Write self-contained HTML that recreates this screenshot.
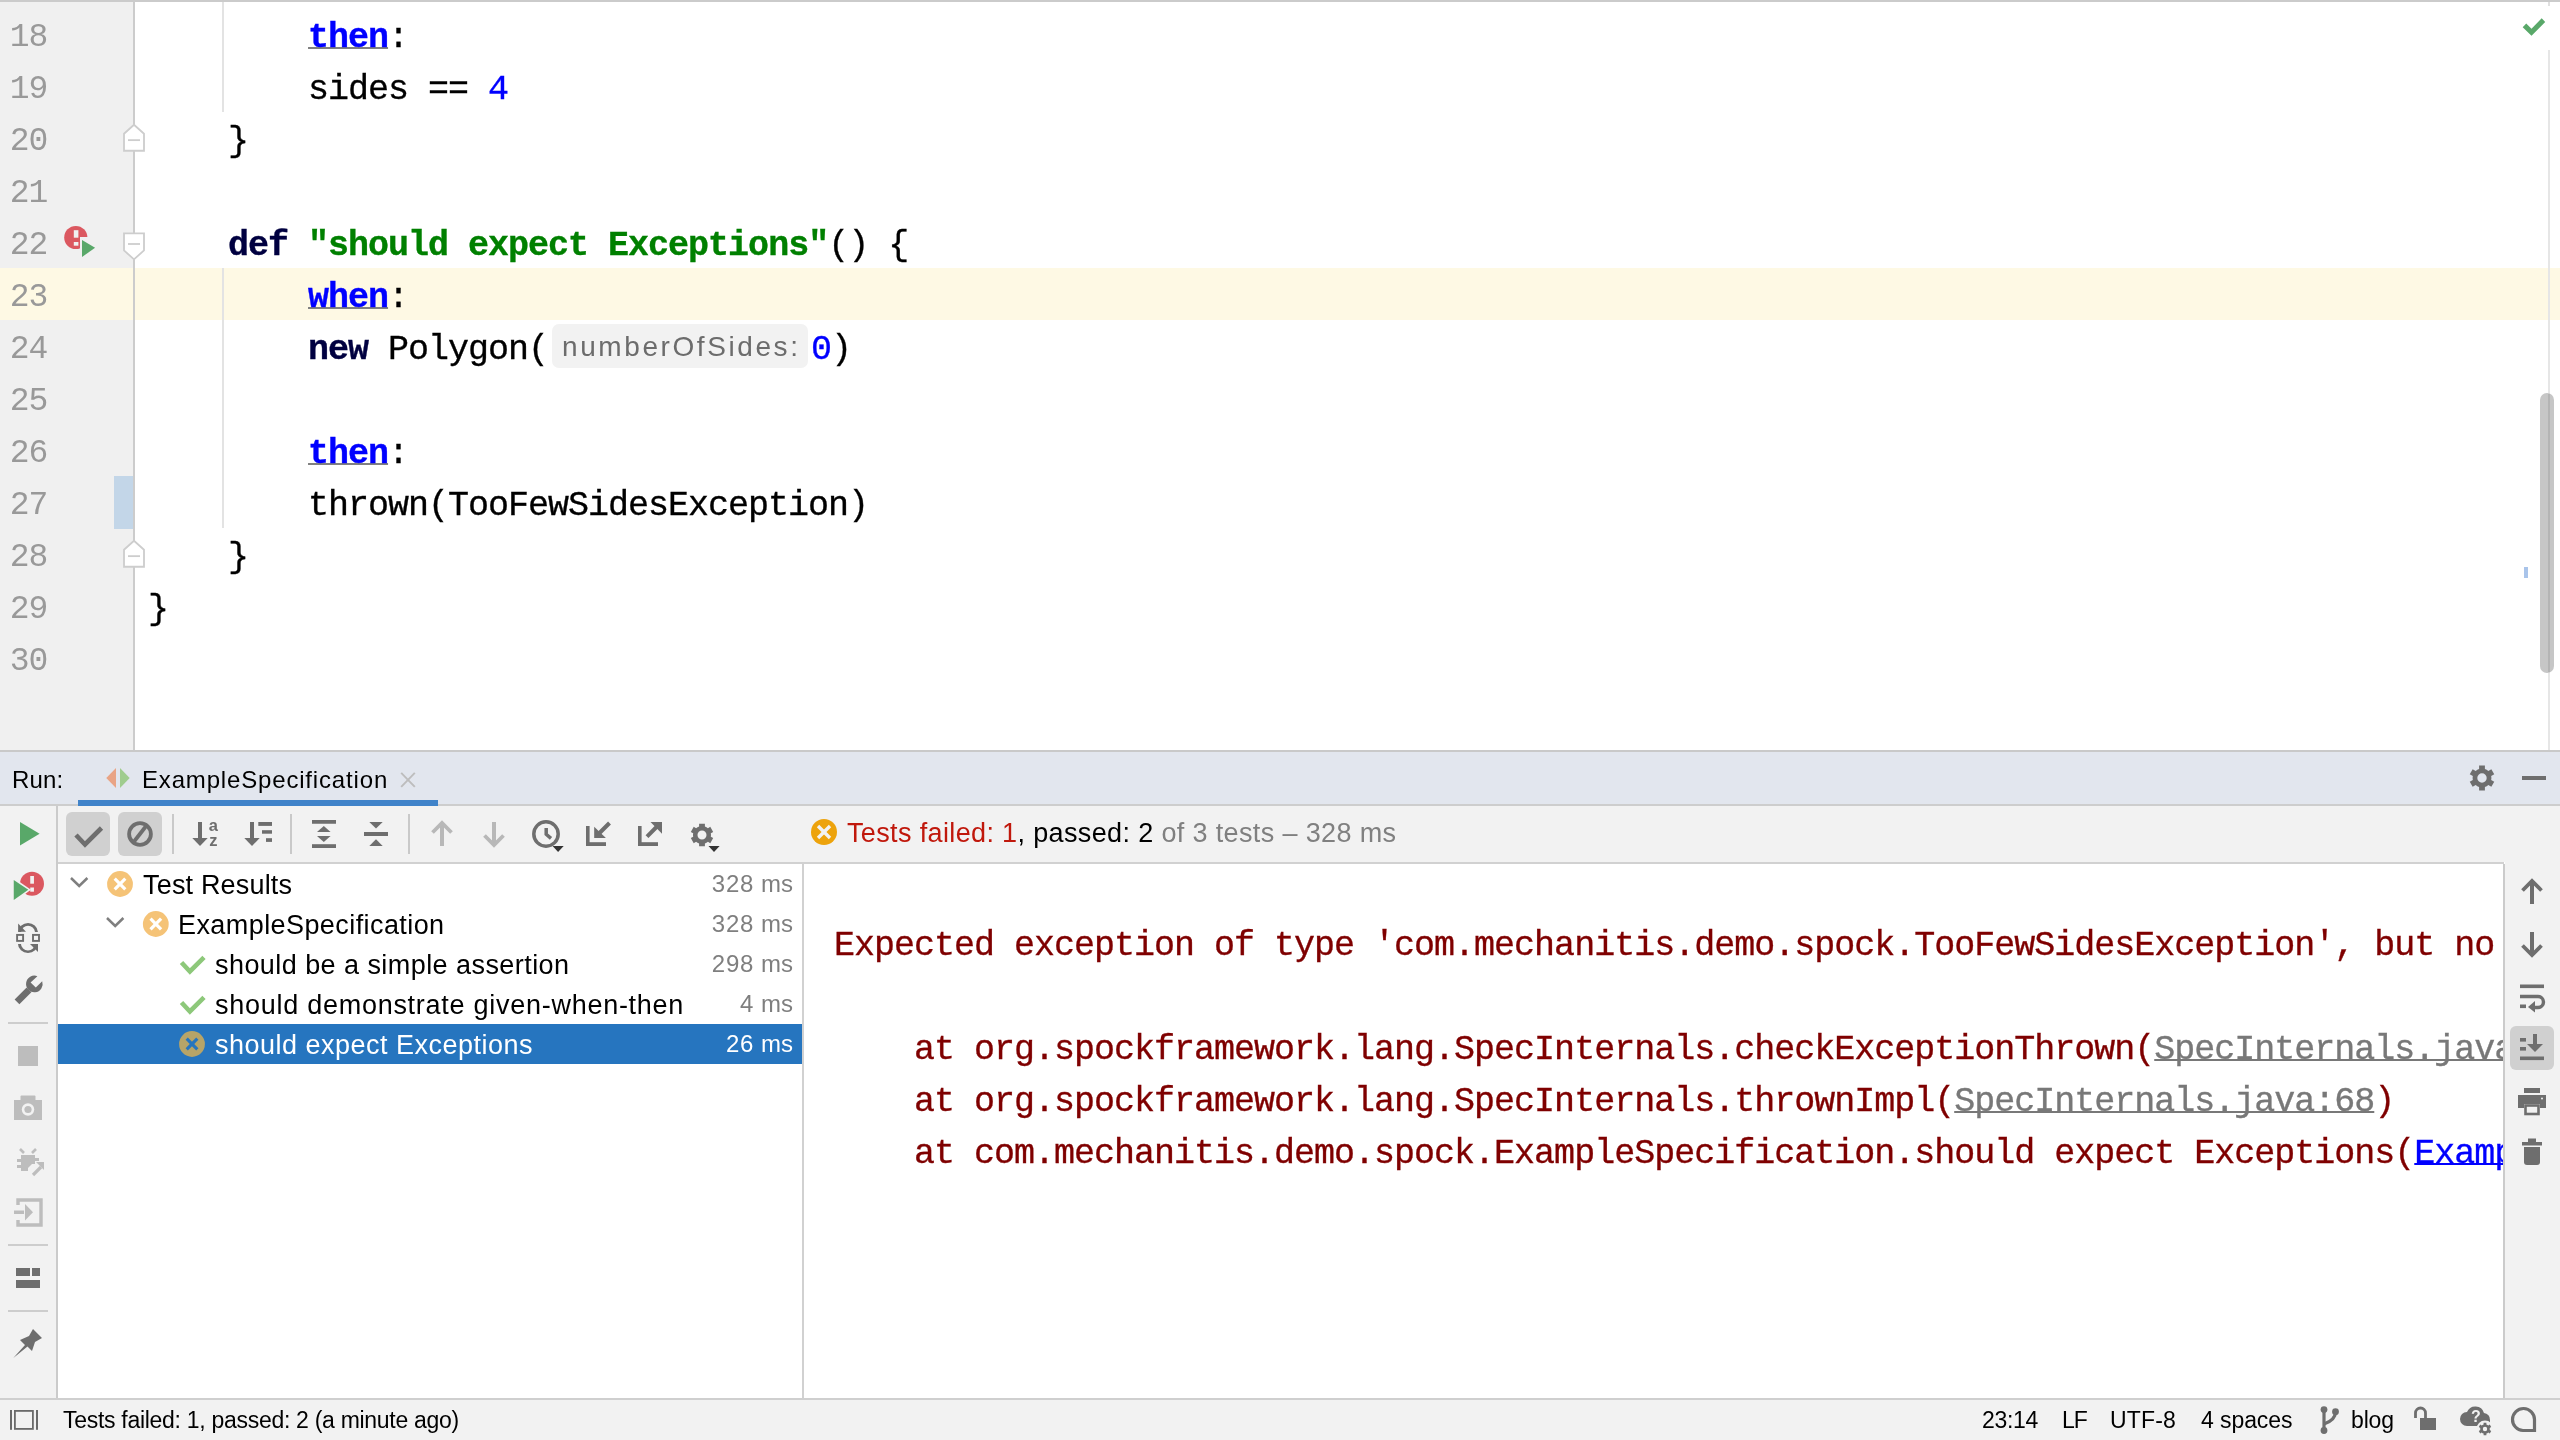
<!DOCTYPE html>
<html><head><meta charset="utf-8">
<style>
*{margin:0;padding:0;box-sizing:border-box}
html,body{width:2560px;height:1440px;overflow:hidden;background:#fff}
body{position:relative;font-family:"Liberation Sans",sans-serif;color:#000}
.a{position:absolute}
.ui,.mono,.ln{will-change:transform}
.mono{font-family:"Liberation Mono",monospace;font-size:35px;letter-spacing:-1px;white-space:pre;line-height:52px;margin-top:3px;-webkit-text-stroke-width:0.35px}
.ln{position:absolute;left:0;width:47px;margin-top:3px;text-align:right;color:#999;font-family:"Liberation Mono",monospace;font-size:33px;letter-spacing:-1.2px;line-height:52px}
.cl{position:absolute;left:148px;height:52px}
.kw{color:#000040;font-weight:bold}
.lab{color:#0000ff;font-weight:bold;text-decoration:underline;text-decoration-color:#808080;text-decoration-thickness:2px;text-underline-offset:0px;text-decoration-skip-ink:none}
.str{color:#008000;font-weight:bold}
.num{color:#0000ff}
.ui{font-size:26px;white-space:pre}
.tm{position:absolute;right:0;color:#808080}
.row{position:absolute;left:58px;width:744px;height:40px;line-height:40px}
.con{position:absolute;left:834px;color:#7f0000}
.lnk{color:#787878;text-decoration:underline;text-decoration-thickness:2px;text-underline-offset:0px;text-decoration-skip-ink:none}
.blnk{color:#0000ff;text-decoration:underline;text-decoration-thickness:2px;text-underline-offset:0px;text-decoration-skip-ink:none}
</style></head><body>

<!-- ===== EDITOR ===== -->
<div class="a" style="left:0;top:0;width:2560px;height:750px;background:#fff;overflow:hidden">
  <div class="a" style="left:0;top:0;width:2560px;height:2px;background:#cbcbcb"></div>
  <div class="a" style="left:0;top:2px;width:133px;height:748px;background:#f0f0f0"></div>
  <!-- caret row -->
  <div class="a" style="left:0;top:268px;width:2560px;height:52px;background:#fef9e4"></div>
  <div class="a" style="left:133px;top:2px;width:2px;height:748px;background:#cccccc"></div>
  <!-- change marker line 27 -->
  <div class="a" style="left:114px;top:476px;width:19px;height:53px;background:#c3d6e8"></div>
  <!-- indent guides -->
  <div class="a" style="left:222px;top:2px;width:2px;height:110px;background:#e3e3e3"></div>
  <div class="a" style="left:222px;top:268px;width:2px;height:260px;background:#e3e3e3"></div>

  <!-- line numbers -->
  <div class="ln" style="top:9px">18</div>
  <div class="ln" style="top:61px">19</div>
  <div class="ln" style="top:113px">20</div>
  <div class="ln" style="top:165px">21</div>
  <div class="ln" style="top:217px">22</div>
  <div class="ln" style="top:269px">23</div>
  <div class="ln" style="top:321px">24</div>
  <div class="ln" style="top:373px">25</div>
  <div class="ln" style="top:425px">26</div>
  <div class="ln" style="top:477px">27</div>
  <div class="ln" style="top:529px">28</div>
  <div class="ln" style="top:581px">29</div>
  <div class="ln" style="top:633px">30</div>

  <!-- code -->
  <div class="cl mono" style="top:9px">        <span class="lab">then</span>:</div>
  <div class="cl mono" style="top:61px">        sides == <span class="num">4</span></div>
  <div class="cl mono" style="top:113px">    }</div>
  <div class="cl mono" style="top:217px">    <span class="kw">def</span> <span class="str">"should expect Exceptions"</span>() {</div>
  <div class="cl mono" style="top:269px">        <span class="lab">when</span>:</div>
  <div class="cl mono" style="top:321px">        <span class="kw">new</span> Polygon(</div>
  <div class="cl mono" style="top:321px;left:811px"><span class="num">0</span>)</div>
  <div class="cl mono" style="top:425px">        <span class="lab">then</span>:</div>
  <div class="cl mono" style="top:477px">        thrown(TooFewSidesException)</div>
  <div class="cl mono" style="top:529px">    }</div>
  <div class="cl mono" style="top:581px">}</div>
  <!-- inlay hint -->
  <div class="a" style="left:552px;top:324px;width:256px;height:44px;border-radius:7px;background:#f2f2f2"></div>
  <div class="a ui" style="left:562px;top:325px;line-height:44px;font-size:28px;color:#6c6c6c;letter-spacing:2.59px">numberOfSides:</div>

  <!-- right side -->
  <div class="a" style="left:2548px;top:50px;width:2px;height:700px;background:#e6e6e6"></div>
  <div class="a" style="left:2540px;top:393px;width:14px;height:280px;border-radius:7px;background:#c6c6c6"></div>
  <div class="a" style="left:2524px;top:567px;width:4px;height:11px;background:#a9c4ea"></div>
</div>

<!-- ===== RUN HEADER ===== -->
<div class="a" style="left:0;top:750px;width:2560px;height:2px;background:#c9c9c9"></div>
<div class="a" style="left:0;top:752px;width:2560px;height:52px;background:#e2e6ee"></div>
<div class="a" style="left:0;top:804px;width:2560px;height:2px;background:#cdcdcd"></div>
<div class="a" style="left:78px;top:800px;width:360px;height:6px;background:#4083c9"></div>
<div class="a ui" style="left:12px;top:753.5px;line-height:52px;font-size:24px;letter-spacing:0.16px">Run:</div>
<div class="a ui" style="left:141.5px;top:753.5px;line-height:52px;font-size:24px;letter-spacing:0.83px">ExampleSpecification</div>

<!-- ===== TOOLBAR ROW ===== -->
<div class="a" style="left:0;top:806px;width:2560px;height:56px;background:#f2f2f2"></div>
<div class="a" style="left:58px;top:862px;width:2446px;height:2px;background:#d1d1d1"></div>
<div class="a ui" style="left:846.5px;top:804.5px;line-height:56px;font-size:27px;letter-spacing:0.36px"><span style="color:#c0180c">Tests failed: 1</span>, passed: 2<span style="color:#808080"> of 3 tests – 328 ms</span></div>

<!-- ===== LEFT TOOLBAR ===== -->
<div class="a" style="left:0;top:862px;width:56px;height:536px;background:#f2f2f2"></div>
<div class="a" style="left:56px;top:806px;width:2px;height:592px;background:#cbcbcb"></div>

<!-- ===== TREE ===== -->
<div class="a" style="left:58px;top:864px;width:744px;height:534px;background:#fff"></div>
<div class="a" style="left:802px;top:864px;width:2px;height:534px;background:#d1d1d1"></div>
<div class="row" style="top:1024px;background:#2675bf"></div>
<div class="a ui" style="left:143.3px;top:864.5px;line-height:40px;font-size:27px;letter-spacing:0.18px">Test Results</div>
<div class="a ui" style="left:177.9px;top:904.5px;line-height:40px;font-size:27px;letter-spacing:0.42px">ExampleSpecification</div>
<div class="a ui" style="left:214.6px;top:944.5px;line-height:40px;font-size:27px;letter-spacing:0.44px">should be a simple assertion</div>
<div class="a ui" style="left:214.6px;top:984.5px;line-height:40px;font-size:27px;letter-spacing:0.73px">should demonstrate given-when-then</div>
<div class="a ui" style="left:214.6px;top:1024.5px;line-height:40px;font-size:27px;letter-spacing:0.49px;color:#fff">should expect Exceptions</div>
<div class="a ui" style="left:600px;width:193px;text-align:right;top:863.5px;line-height:40px;font-size:24px;color:#7f7f7f;letter-spacing:0.7px">328<span style="margin-left:7px;letter-spacing:0">ms</span></div>
<div class="a ui" style="left:600px;width:193px;text-align:right;top:903.5px;line-height:40px;font-size:24px;color:#7f7f7f;letter-spacing:0.7px">328<span style="margin-left:7px;letter-spacing:0">ms</span></div>
<div class="a ui" style="left:600px;width:193px;text-align:right;top:943.5px;line-height:40px;font-size:24px;color:#7f7f7f;letter-spacing:0.7px">298<span style="margin-left:7px;letter-spacing:0">ms</span></div>
<div class="a ui" style="left:600px;width:193px;text-align:right;top:983.5px;line-height:40px;font-size:24px;color:#7f7f7f;letter-spacing:0.7px">4<span style="margin-left:7px;letter-spacing:0">ms</span></div>
<div class="a ui" style="left:600px;width:193px;text-align:right;top:1023.5px;line-height:40px;font-size:24px;color:#fff;letter-spacing:0.7px">26<span style="margin-left:7px;letter-spacing:0">ms</span></div>

<!-- ===== CONSOLE ===== -->
<div class="a" style="left:804px;top:864px;width:1699px;height:534px;background:#fff;overflow:hidden">
  <div class="a mono" style="left:30px;top:53px;color:#7f0000">Expected exception of type 'com.mechanitis.demo.spock.TooFewSidesException', but no exception was thrown</div>
  <div class="a mono" style="left:30px;top:157px;color:#7f0000">    at org.spockframework.lang.SpecInternals.checkExceptionThrown(<span class="lnk">SpecInternals.java:79</span>)</div>
  <div class="a mono" style="left:30px;top:209px;color:#7f0000">    at org.spockframework.lang.SpecInternals.thrownImpl(<span class="lnk">SpecInternals.java:68</span>)</div>
  <div class="a mono" style="left:30px;top:261px;color:#7f0000">    at com.mechanitis.demo.spock.ExampleSpecification.should expect Exceptions(<span class="blnk">ExampleSpecification.groovy:26</span>)</div>
</div>
<div class="a" style="left:2503px;top:864px;width:2px;height:534px;background:#cbcbcb"></div>
<div class="a" style="left:2505px;top:862px;width:55px;height:536px;background:#f2f2f2"></div>

<!-- ===== STATUS BAR ===== -->
<div class="a" style="left:0;top:1398px;width:2560px;height:2px;background:#cfcfcf"></div>
<div class="a" style="left:0;top:1400px;width:2560px;height:40px;background:#f2f2f2"></div>
<div class="a ui" style="left:63px;top:1400px;line-height:40px;font-size:23px;letter-spacing:-0.29px">Tests failed: 1, passed: 2 (a minute ago)</div>
<div class="a ui" style="left:1981.5px;top:1400px;line-height:40px;font-size:23px;letter-spacing:-0.3px">23:14</div>
<div class="a ui" style="left:2062px;top:1400px;line-height:40px;font-size:23px;letter-spacing:-1px">LF</div>
<div class="a ui" style="left:2110px;top:1400px;line-height:40px;font-size:23px;letter-spacing:0.15px">UTF-8</div>
<div class="a ui" style="left:2201px;top:1400px;line-height:40px;font-size:23px;letter-spacing:-0.08px">4 spaces</div>
<div class="a ui" style="left:2350.8px;top:1400px;line-height:40px;font-size:23px;letter-spacing:-0.16px">blog</div>

<svg class="a" style="left:0;top:0" width="2560" height="1440">
<polygon points="2522.70,27.30 2526.25,23.50 2531.50,28.75 2541.70,18.30 2545.20,21.90 2531.50,35.80" fill="#59a869" />
<rect x="2548.00" y="2.00" width="2.00" height="4.00" rx="0.00" fill="#e0e0e0" />
<rect x="2548.00" y="394.00" width="2.00" height="278.00" rx="0.00" fill="#b4b4b4" />
<circle cx="75.80" cy="237.50" r="11.60" fill="#db5860" />
<rect x="80.00" y="237.00" width="12.00" height="24.00" rx="0.00" fill="#f0f0f0" />
<rect x="73.80" y="230.20" width="4.60" height="7.50" rx="0.00" fill="#f0f0f0" />
<rect x="73.80" y="242.00" width="4.60" height="3.70" rx="0.00" fill="#f0f0f0" />
<polygon points="82.00,240.00 82.00,257.00 95.10,247.80" fill="#59a869" />
<polygon points="124.00,150.75 144.00,150.75 144.00,133.75 134.00,124.75 124.00,133.75" fill="#fff" stroke="#cdcdcd" stroke-width="1.8"/>
<line x1="128.00" y1="140.15" x2="140.00" y2="140.15" stroke="#cdcdcd" stroke-width="1.80" stroke-linecap="butt"/>
<polygon points="124.00,233.40 144.00,233.40 144.00,250.40 134.00,259.40 124.00,250.40" fill="#fff" stroke="#cdcdcd" stroke-width="1.8"/>
<line x1="128.00" y1="244.00" x2="140.00" y2="244.00" stroke="#cdcdcd" stroke-width="1.80" stroke-linecap="butt"/>
<polygon points="124.00,566.75 144.00,566.75 144.00,549.75 134.00,540.75 124.00,549.75" fill="#fff" stroke="#cdcdcd" stroke-width="1.8"/>
<line x1="128.00" y1="556.15" x2="140.00" y2="556.15" stroke="#cdcdcd" stroke-width="1.80" stroke-linecap="butt"/>
<polygon points="106.25,778.00 116.00,768.00 116.00,788.00" fill="#e9a485" />
<polygon points="120.00,768.00 120.00,788.00 129.70,778.00" fill="#9fcc8e" />
<line x1="401.20" y1="772.80" x2="414.80" y2="786.80" stroke="#bdbdbd" stroke-width="1.90" stroke-linecap="butt"/>
<line x1="414.80" y1="772.80" x2="401.20" y2="786.80" stroke="#bdbdbd" stroke-width="1.90" stroke-linecap="butt"/>
<path d="M2479.10 769.06 L2479.10 765.53 L2484.90 765.53 L2484.90 769.06 A9.40 9.40 0 0 1 2488.29 771.02 L2491.35 769.25 L2494.25 774.28 L2491.19 776.04 A9.40 9.40 0 0 1 2491.19 779.96 L2494.25 781.72 L2491.35 786.75 L2488.29 784.98 A9.40 9.40 0 0 1 2484.90 786.94 L2484.90 790.47 L2479.10 790.47 L2479.10 786.94 A9.40 9.40 0 0 1 2475.71 784.98 L2472.65 786.75 L2469.75 781.72 L2472.81 779.96 A9.40 9.40 0 0 1 2472.81 776.04 L2469.75 774.28 L2472.65 769.25 L2475.71 771.02 A9.40 9.40 0 0 1 2479.10 769.06 Z M2477.30 778.00 A4.70 4.70 0 1 0 2486.70 778.00 A4.70 4.70 0 1 0 2477.30 778.00 Z" fill="#6e6e6e" fill-rule="evenodd"/>
<rect x="2522.00" y="776.00" width="24.00" height="4.00" rx="0.00" fill="#6e6e6e" />
<rect x="66.00" y="812.00" width="44.00" height="44.00" rx="6.00" fill="#d0d0d0" />
<rect x="118.00" y="812.00" width="44.00" height="44.00" rx="6.00" fill="#d0d0d0" />
<polyline points="76,835 85,844.5 101.5,828" fill="none" stroke="#6e6e6e" stroke-width="4.6"/>
<circle cx="140" cy="834" r="10.9" fill="none" stroke="#6e6e6e" stroke-width="3.8"/>
<line x1="133.30" y1="842.50" x2="146.90" y2="825.00" stroke="#6e6e6e" stroke-width="3.80" stroke-linecap="butt"/>
<rect x="172.00" y="814.00" width="2.00" height="40.00" rx="0.00" fill="#c9c9c9" />
<rect x="408.00" y="814.00" width="2.00" height="40.00" rx="0.00" fill="#c9c9c9" />
<rect x="290.00" y="814.00" width="2.00" height="40.00" rx="0.00" fill="#c9c9c9" />
<rect x="198.00" y="822.00" width="4.00" height="17.00" rx="0.00" fill="#6e6e6e" />
<polygon points="192.30,838.00 207.70,838.00 200.00,846.00" fill="#6e6e6e" />
<text x="213.4" y="831" font-family="Liberation Sans" font-weight="bold" font-size="16.5" fill="#6e6e6e" text-anchor="middle">a</text>
<text x="213.4" y="846" font-family="Liberation Sans" font-weight="bold" font-size="16.5" fill="#6e6e6e" text-anchor="middle">z</text>
<rect x="250.00" y="822.00" width="4.00" height="17.00" rx="0.00" fill="#6e6e6e" />
<polygon points="244.30,838.00 259.70,838.00 252.00,846.00" fill="#6e6e6e" />
<rect x="258.30" y="822.00" width="13.70" height="3.90" rx="0.00" fill="#6e6e6e" />
<rect x="262.00" y="830.20" width="10.00" height="3.50" rx="0.00" fill="#6e6e6e" />
<rect x="266.00" y="838.20" width="6.00" height="3.70" rx="0.00" fill="#6e6e6e" />
<rect x="312.00" y="820.00" width="24.00" height="3.75" rx="0.00" fill="#6e6e6e" />
<polygon points="317.00,832.00 330.60,832.00 323.80,826.00" fill="#6e6e6e" />
<polygon points="317.00,836.00 330.60,836.00 323.80,842.00" fill="#6e6e6e" />
<rect x="312.00" y="844.20" width="24.00" height="3.80" rx="0.00" fill="#6e6e6e" />
<polygon points="369.30,822.00 382.70,822.00 376.00,828.40" fill="#6e6e6e" />
<rect x="364.00" y="832.00" width="24.00" height="4.00" rx="0.00" fill="#6e6e6e" />
<polygon points="369.30,846.00 382.70,846.00 376.00,839.30" fill="#6e6e6e" />
<rect x="440.00" y="824.00" width="4.00" height="22.00" rx="0.00" fill="#b8b8b8" />
<polyline points="432.5,832.5 442,823 451.5,832.5" fill="none" stroke="#b8b8b8" stroke-width="3.8"/>
<rect x="492.00" y="822.00" width="4.00" height="22.00" rx="0.00" fill="#b8b8b8" />
<polyline points="484.5,835.5 494,845 503.5,835.5" fill="none" stroke="#b8b8b8" stroke-width="3.8"/>
<circle cx="546" cy="834" r="12.2" fill="none" stroke="#6e6e6e" stroke-width="3.5"/>
<polyline points="546.2,828 546.2,834.3 551,838.4" fill="none" stroke="#6e6e6e" stroke-width="3.5"/>
<polygon points="552.60,846.00 563.70,846.00 558.10,852.00" fill="#333" />
<rect x="586.00" y="826.00" width="3.60" height="20.00" rx="0.00" fill="#6e6e6e" />
<rect x="586.00" y="842.20" width="20.00" height="3.80" rx="0.00" fill="#6e6e6e" />
<line x1="609.50" y1="823.00" x2="598.00" y2="834.50" stroke="#6e6e6e" stroke-width="4.00" stroke-linecap="butt"/>
<polygon points="594.20,826.70 594.20,838.00 605.90,838.00" fill="#6e6e6e" />
<rect x="638.00" y="826.00" width="3.60" height="20.00" rx="0.00" fill="#6e6e6e" />
<rect x="638.00" y="842.20" width="20.00" height="3.80" rx="0.00" fill="#6e6e6e" />
<line x1="647.00" y1="836.60" x2="657.50" y2="826.00" stroke="#6e6e6e" stroke-width="4.00" stroke-linecap="butt"/>
<polygon points="650.50,822.00 662.00,822.00 662.00,833.70" fill="#6e6e6e" />
<path d="M699.10 826.48 L699.10 823.77 L704.90 823.77 L704.90 826.48 A9.00 9.00 0 0 1 707.93 828.23 L710.28 826.87 L713.18 831.90 L710.83 833.25 A9.00 9.00 0 0 1 710.83 836.75 L713.18 838.10 L710.28 843.13 L707.93 841.77 A9.00 9.00 0 0 1 704.90 843.52 L704.90 846.23 L699.10 846.23 L699.10 843.52 A9.00 9.00 0 0 1 696.07 841.77 L693.72 843.13 L690.82 838.10 L693.17 836.75 A9.00 9.00 0 0 1 693.17 833.25 L690.82 831.90 L693.72 826.87 L696.07 828.23 A9.00 9.00 0 0 1 699.10 826.48 Z M697.50 835.00 A4.50 4.50 0 1 0 706.50 835.00 A4.50 4.50 0 1 0 697.50 835.00 Z" fill="#6e6e6e" fill-rule="evenodd"/>
<polygon points="708.50,846.00 719.60,846.00 714.00,852.00" fill="#333" />
<circle cx="824.00" cy="832.00" r="13.00" fill="#eda30c" />
<line x1="818.00" y1="826.00" x2="830.00" y2="838.00" stroke="#f2f2f2" stroke-width="3.40" stroke-linecap="butt"/>
<line x1="830.00" y1="826.00" x2="818.00" y2="838.00" stroke="#f2f2f2" stroke-width="3.40" stroke-linecap="butt"/>
<polygon points="20.00,822.00 20.00,845.60 39.60,833.80" fill="#59a869" />
<circle cx="32.00" cy="883.70" r="12.00" fill="#db5860" />
<polygon points="11.00,876.00 11.00,904.00 31.00,889.80" fill="#f2f2f2" />
<polygon points="13.75,879.90 13.75,900.00 28.30,889.80" fill="#59a869" />
<rect x="30.25" y="876.00" width="3.70" height="7.70" rx="0.00" fill="#f2f2f2" />
<rect x="30.25" y="887.50" width="3.70" height="4.20" rx="0.00" fill="#f2f2f2" />
<path d="M18.1 932 A10 10 0 0 1 38 932 L35 932 A7 7 0 0 0 21.1 932 Z" fill="#6e6e6e" />
<polygon points="18.10,923.60 18.10,931.80 26.00,931.80" fill="#6e6e6e" />
<path d="M18 944 A10 9 0 0 0 38 944 L35 944 A7 6.5 0 0 1 21 944 Z" fill="#6e6e6e" />
<polygon points="30.00,944.00 38.00,944.00 38.00,952.00" fill="#6e6e6e" />
<rect x="17.1" y="934.9" width="6" height="6" fill="none" stroke="#6e6e6e" stroke-width="1.9"/>
<rect x="33" y="934.9" width="6" height="6" fill="none" stroke="#6e6e6e" stroke-width="1.9"/>
<line x1="17.00" y1="1001.80" x2="29.00" y2="989.80" stroke="#6e6e6e" stroke-width="6.80" stroke-linecap="butt"/>
<path d="M37.4 976.2 A8.3 8.3 0 1 0 42.2 981.2 L35.8 987.4 L30.6 982.4 Z" fill="#6e6e6e" />
<rect x="8.00" y="1022.00" width="40.00" height="2.00" rx="0.00" fill="#cdcdcd" />
<rect x="18.00" y="1046.00" width="20.00" height="20.00" rx="0.00" fill="#bdbdbd" />
<rect x="14.00" y="1100.00" width="28.00" height="20.00" rx="0.00" fill="#bdbdbd" />
<rect x="20.50" y="1095.50" width="15.00" height="6.00" rx="1.00" fill="#bdbdbd" />
<circle cx="28.00" cy="1109.50" r="6.20" fill="#f2f2f2" />
<circle cx="28.00" cy="1109.50" r="3.60" fill="#bdbdbd" />
<path d="M20 1149 L24 1153 M36 1149 L32 1153" fill="none" stroke="#bdbdbd" stroke-width="2.6"/>
<path d="M21 1155 h14 v3 h4 v3 h-4 v3 h-3 l-4 4 v3 h-7 v-3 h-4 v-3 h4 v-3 h-4 v-3 h4 z" fill="#bdbdbd" />
<path d="M33 1175 L41 1167" fill="none" stroke="#bdbdbd" stroke-width="3.2"/>
<polygon points="36.00,1162.00 44.00,1162.00 44.00,1170.00" fill="#bdbdbd" />
<polyline points="18,1205 18,1200 41,1200 41,1225 18,1225 18,1220" fill="none" stroke="#bdbdbd" stroke-width="3.4"/>
<rect x="14.00" y="1210.50" width="10.00" height="3.50" rx="0.00" fill="#bdbdbd" />
<polygon points="25.00,1204.00 25.00,1220.50 33.00,1212.20" fill="#bdbdbd" />
<rect x="8.00" y="1244.00" width="40.00" height="2.00" rx="0.00" fill="#cdcdcd" />
<rect x="16.00" y="1268.00" width="14.00" height="8.00" rx="0.00" fill="#6e6e6e" />
<rect x="32.00" y="1268.00" width="8.00" height="8.00" rx="0.00" fill="#6e6e6e" />
<rect x="16.00" y="1280.00" width="24.00" height="8.00" rx="0.00" fill="#6e6e6e" />
<rect x="8.00" y="1310.00" width="40.00" height="2.00" rx="0.00" fill="#cdcdcd" />
<path d="M13.3 1358 L25 1345 L20 1340 L29 1336 L33 1329 L42 1338 L35 1342 L32 1351 L27.5 1346.5 Z" fill="#6e6e6e" />
<polyline points="71,878 79.2,886 87.4,878" fill="none" stroke="#7f7f7f" stroke-width="2.5"/>
<polyline points="107,918 115.2,926 123.4,918" fill="none" stroke="#7f7f7f" stroke-width="2.5"/>
<circle cx="120.00" cy="884.00" r="12.90" fill="#f5c377" />
<line x1="114.70" y1="878.70" x2="125.30" y2="889.30" stroke="#fff" stroke-width="3.20" stroke-linecap="butt"/>
<line x1="125.30" y1="878.70" x2="114.70" y2="889.30" stroke="#fff" stroke-width="3.20" stroke-linecap="butt"/>
<circle cx="155.80" cy="924.00" r="12.90" fill="#f5c377" />
<line x1="150.50" y1="918.70" x2="161.10" y2="929.30" stroke="#fff" stroke-width="3.20" stroke-linecap="butt"/>
<line x1="161.10" y1="918.70" x2="150.50" y2="929.30" stroke="#fff" stroke-width="3.20" stroke-linecap="butt"/>
<polyline points="181.5,962.5 189.9,971.5 204,957.4" fill="none" stroke="#8dc87a" stroke-width="4.6"/>
<polyline points="181.5,1002.5 189.9,1011.5 204,997.4" fill="none" stroke="#8dc87a" stroke-width="4.6"/>
<circle cx="192.00" cy="1044.00" r="12.90" fill="#b7a468" />
<line x1="186.70" y1="1038.70" x2="197.30" y2="1049.30" stroke="#2675bf" stroke-width="3.20" stroke-linecap="butt"/>
<line x1="197.30" y1="1038.70" x2="186.70" y2="1049.30" stroke="#2675bf" stroke-width="3.20" stroke-linecap="butt"/>
<rect x="2530.00" y="882.00" width="4.00" height="22.00" rx="0.00" fill="#6e6e6e" />
<polyline points="2522.5,890.5 2532,881 2541.5,890.5" fill="none" stroke="#6e6e6e" stroke-width="3.8"/>
<rect x="2530.00" y="932.00" width="4.00" height="22.00" rx="0.00" fill="#6e6e6e" />
<polyline points="2522.5,945.5 2532,955 2541.5,945.5" fill="none" stroke="#6e6e6e" stroke-width="3.8"/>
<rect x="2520.00" y="984.50" width="24.00" height="3.60" rx="0.00" fill="#6e6e6e" />
<rect x="2520.00" y="1004.50" width="6.00" height="3.60" rx="0.00" fill="#6e6e6e" />
<path d="M2520 996.5 H2538 A5.5 5.5 0 0 1 2538 1007.5 H2532" fill="none" stroke="#6e6e6e" stroke-width="3.4"/>
<polygon points="2528.00,1007.00 2535.00,1001.00 2535.00,1012.50" fill="#6e6e6e" />
<rect x="2510.00" y="1026.00" width="44.00" height="44.00" rx="6.00" fill="#d0d0d0" />
<rect x="2520.00" y="1038.00" width="6.00" height="3.60" rx="0.00" fill="#6e6e6e" />
<rect x="2520.00" y="1047.00" width="6.00" height="3.60" rx="0.00" fill="#6e6e6e" />
<rect x="2520.00" y="1056.50" width="24.00" height="3.60" rx="0.00" fill="#6e6e6e" />
<rect x="2533.00" y="1034.00" width="4.00" height="12.00" rx="0.00" fill="#6e6e6e" />
<polygon points="2527.00,1044.00 2543.00,1044.00 2535.00,1052.00" fill="#6e6e6e" />
<rect x="2524.00" y="1088.00" width="16.00" height="5.00" rx="0.00" fill="#6e6e6e" />
<path d="M2518 1095 H2546 V1108 H2540 V1104 H2524 V1108 H2518 Z" fill="#6e6e6e" />
<rect x="2525.5" y="1105.5" width="13" height="8.5" fill="none" stroke="#6e6e6e" stroke-width="2.6"/>
<circle cx="2542.00" cy="1098.50" r="1.00" fill="#f2f2f2" />
<rect x="2522.00" y="1142.00" width="20.00" height="3.50" rx="0.00" fill="#6e6e6e" />
<rect x="2528.00" y="1138.50" width="8.00" height="4.00" rx="0.00" fill="#6e6e6e" />
<path d="M2524 1147 H2540 V1162 Q2540 1165 2537 1165 H2527 Q2524 1165 2524 1162 Z" fill="#6e6e6e" />
<rect x="10.00" y="1410.00" width="2.00" height="19.80" rx="0.00" fill="#6a6a6a" />
<rect x="36.00" y="1410.00" width="2.00" height="19.80" rx="0.00" fill="#6a6a6a" />
<rect x="14.9" y="1410.9" width="18" height="18" fill="none" stroke="#6a6a6a" stroke-width="1.8"/>
<circle cx="2324.00" cy="1409.60" r="3.40" fill="#6e6e6e" />
<circle cx="2324.00" cy="1430.50" r="3.40" fill="#6e6e6e" />
<circle cx="2335.50" cy="1411.70" r="3.40" fill="#6e6e6e" />
<line x1="2324.00" y1="1410.00" x2="2324.00" y2="1430.00" stroke="#6e6e6e" stroke-width="3.20" stroke-linecap="butt"/>
<path d="M2335.5 1412 Q2335.5 1420 2324 1424" fill="none" stroke="#6e6e6e" stroke-width="3.2"/>
<path d="M2415.5 1418 V1413 A5 5 0 0 1 2425.5 1413 V1419" fill="none" stroke="#6e6e6e" stroke-width="2.8"/>
<rect x="2420.00" y="1418.00" width="16.00" height="12.00" rx="0.00" fill="#6e6e6e" />
<path d="M2467 1426 A7 7 0 0 1 2467 1412 A9 9 0 0 1 2484 1413 A6.5 6.5 0 0 1 2490 1420 L2490 1426 Z" fill="#6e6e6e" />
<text x="2476" y="1422" font-family="Liberation Sans" font-weight="bold" font-size="16" fill="#f2f2f2" text-anchor="middle">?</text>
<circle cx="2485.00" cy="1429.00" r="8.50" fill="#f2f2f2" />
<path d="M2483.60 1424.41 L2483.60 1422.65 L2486.40 1422.65 L2486.40 1424.41 A4.80 4.80 0 0 1 2488.28 1425.49 L2489.80 1424.61 L2491.20 1427.04 L2489.68 1427.92 A4.80 4.80 0 0 1 2489.68 1430.08 L2491.20 1430.96 L2489.80 1433.39 L2488.28 1432.51 A4.80 4.80 0 0 1 2486.40 1433.59 L2486.40 1435.35 L2483.60 1435.35 L2483.60 1433.59 A4.80 4.80 0 0 1 2481.72 1432.51 L2480.20 1433.39 L2478.80 1430.96 L2480.32 1430.08 A4.80 4.80 0 0 1 2480.32 1427.92 L2478.80 1427.04 L2480.20 1424.61 L2481.72 1425.49 A4.80 4.80 0 0 1 2483.60 1424.41 Z M2482.80 1429.00 A2.20 2.20 0 1 0 2487.20 1429.00 A2.20 2.20 0 1 0 2482.80 1429.00 Z" fill="#6e6e6e" fill-rule="evenodd"/>
<path d="M2534.5 1430.5 H2523 A11 11 0 1 1 2534.5 1419.5 Z" fill="none" stroke="#6e6e6e" stroke-width="3.2"/>
</svg>
</body></html>
